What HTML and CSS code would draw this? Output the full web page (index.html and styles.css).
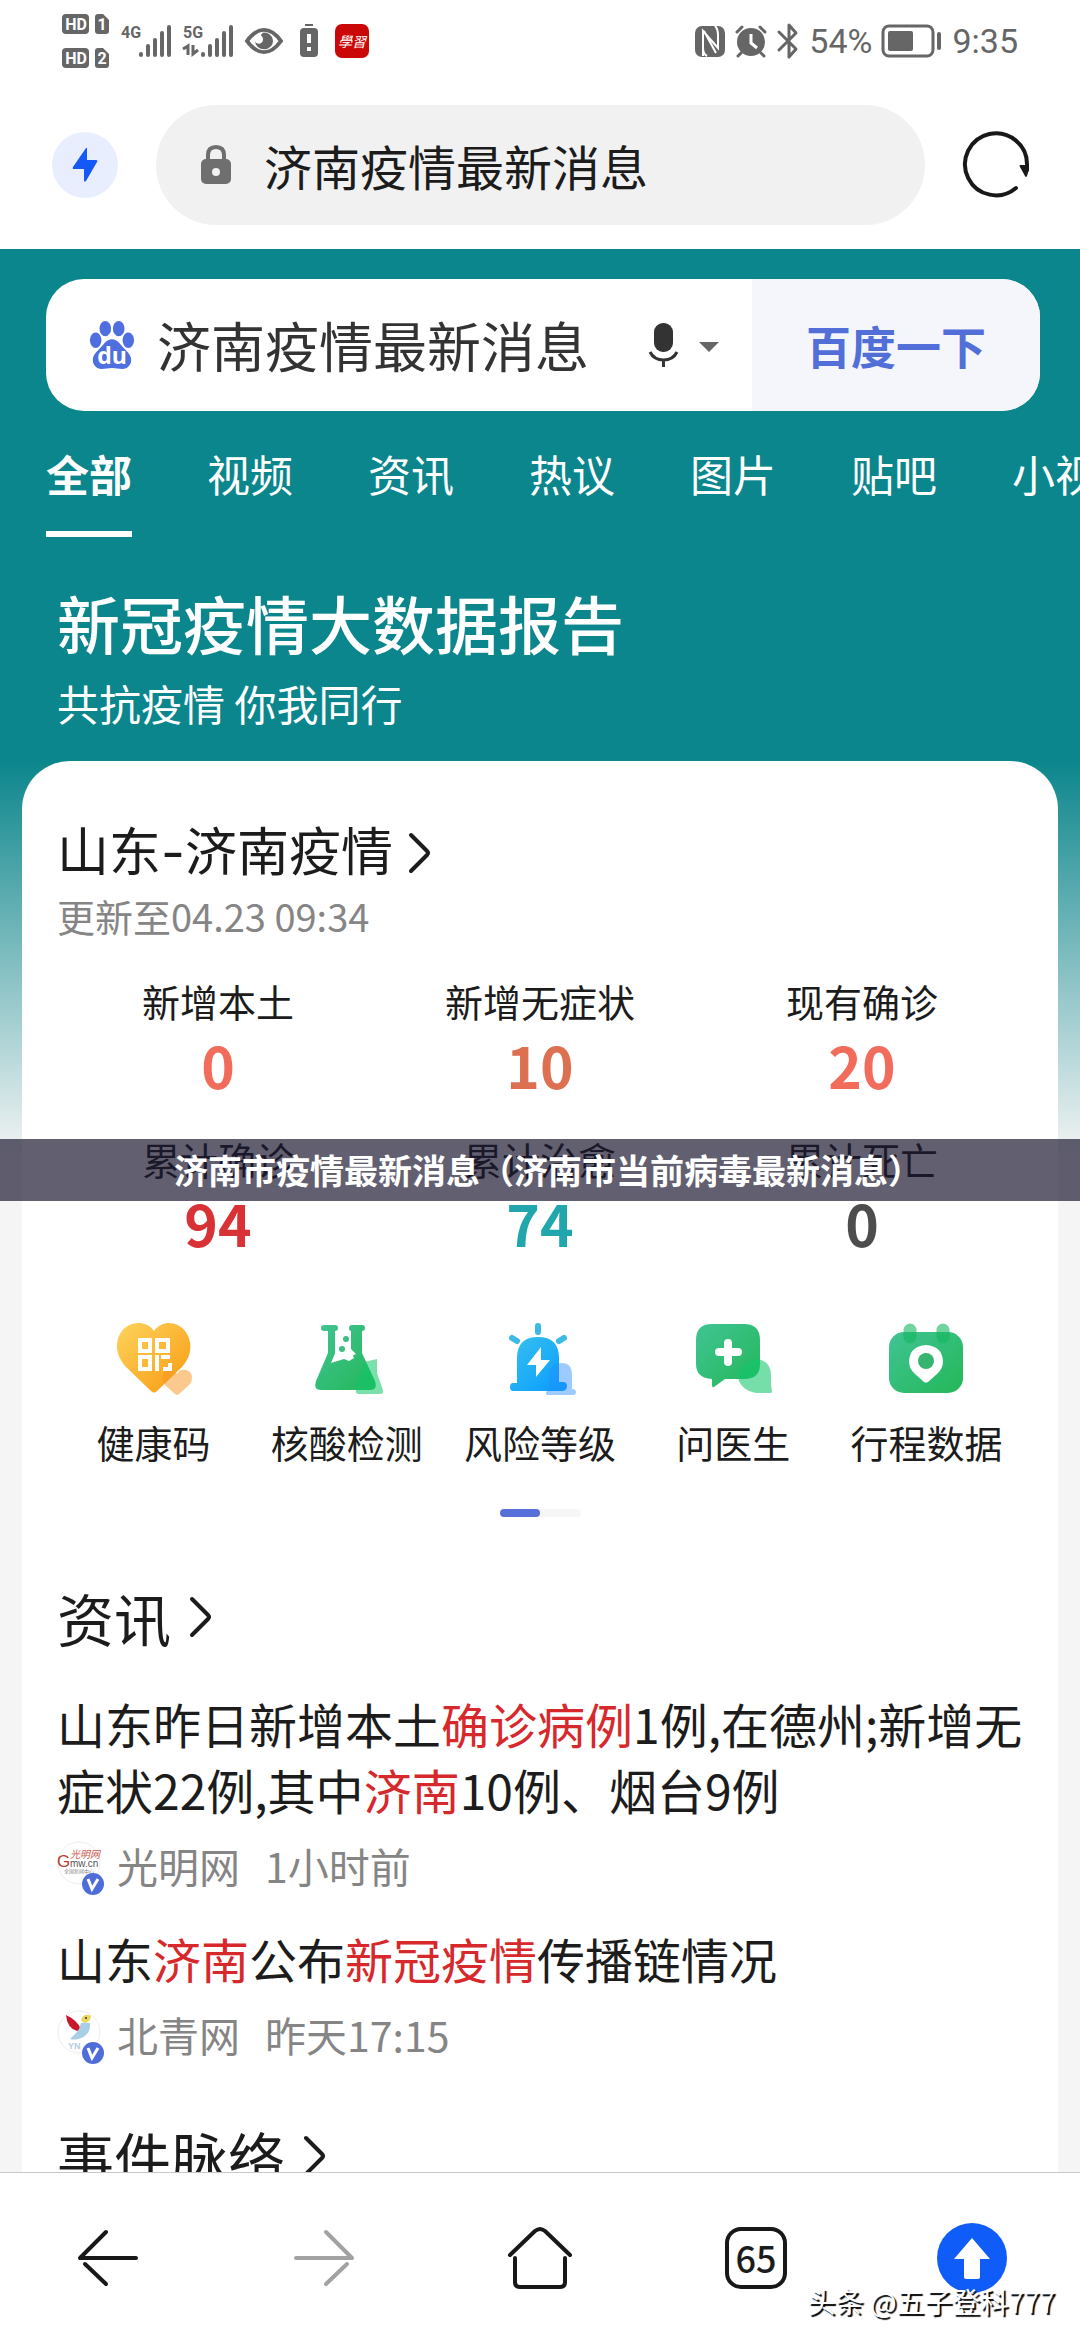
FILE: index.html
```html
<!DOCTYPE html>
<html lang="zh-CN">
<head>
<meta charset="utf-8">
<meta name="viewport" content="width=device-width, initial-scale=1">
<title>济南疫情最新消息</title>
<link rel="stylesheet" href="styles.css">
</head>
<body>
<header class="browser-top">
  <div class="status">
    <div class="status-group">
      <svg width="47" height="54" viewBox="0 0 47 54" class="sim">
        <rect width="27" height="20" rx="4"/><path d="M36 0h5l6 6v11a3 3 0 0 1-3 3h-8a3 3 0 0 1-3-3V3a3 3 0 0 1 3-3z"/>
        <rect y="34" width="27" height="20" rx="4"/><path d="M36 34h5l6 6v11a3 3 0 0 1-3 3h-8a3 3 0 0 1-3-3V37a3 3 0 0 1 3-3z"/>
        <text x="14" y="16">HD</text><text x="40" y="16">1</text>
        <text x="14" y="50">HD</text><text x="40" y="50">2</text>
      </svg>
      <svg width="50" height="32" viewBox="0 0 50 32" class="signal">
        <text x="0" y="13">4G</text>
        <path d="M20 29v1M27 21v9M34 15v15M41 8v22M48 2v28"/>
      </svg>
      <svg width="50" height="32" viewBox="0 0 50 32" class="signal">
        <text x="0" y="13">5G</text>
        <path d="M20 29v1M27 21v9M34 15v15M41 8v22M48 2v28"/>
        <path d="M0 24l5-3v9M10 20v9l5-4" class="thin"/>
      </svg>
      <svg width="38" height="26" viewBox="0 0 38 28" preserveAspectRatio="none">
        <path d="M2 14Q10 2 19 2t17 12Q28 26 19 26T2 14z" fill="none" stroke="#666" stroke-width="4"/>
        <path d="M18 5a9 9 0 1 1-8 9q1 3 4 3a5 5 0 0 0 4-5q0-3-2-4 0-2 2-3z" fill="#666"/>
      </svg>
      <svg width="28" height="34" viewBox="0 0 28 34">
        <path d="M10 1h8" stroke="#666" stroke-width="2"/><rect x="5" y="4" width="18" height="29" rx="4" fill="#666"/>
        <path d="M14 10v9M14 23v4" stroke="#fff" stroke-width="4"/>
      </svg>
      <span class="study">學習</span>
    </div>
    <div class="status-group right">
      <svg width="30" height="31" viewBox="0 0 30 31">
        <rect width="30" height="31" rx="7" fill="#666"/>
        <path d="M8 30V5l15 17V9q0-6-3-9M8 9v13q0 6 4 8M9 5l12 22" fill="none" stroke="#fff" stroke-width="2"/>
      </svg>
      <svg width="32" height="32" viewBox="0 0 32 32">
        <circle cx="16" cy="17" r="14" fill="#666"/>
        <path d="M2 7l5-5M30 7l-5-5M6 28l-3 3M26 28l3 3" stroke="#666" stroke-width="3" stroke-linecap="round"/>
        <path d="M16 9v9l6 5" fill="none" stroke="#fff" stroke-width="3"/>
      </svg>
      <svg width="22" height="36" viewBox="0 0 22 36">
        <path d="M2 9l17 17-7 8V2l7 8L2 27" fill="none" stroke="#666" stroke-width="3" stroke-linejoin="round" stroke-linecap="round"/>
      </svg>
      <span>54%</span>
      <svg width="60" height="34" viewBox="0 0 60 34">
        <rect x="1" y="2" width="50" height="30" rx="6" fill="none" stroke="#666" stroke-width="3"/>
        <rect x="6" y="7" width="25" height="20" rx="2" fill="#666"/>
        <path d="M57 10v14" stroke="#666" stroke-width="4" stroke-linecap="round"/>
      </svg>
      <span>9:35</span>
    </div>
  </div>
  <div class="toolbar">
    <button class="flash" aria-label="极速模式">
      <svg width="26" height="36" viewBox="0 0 26 36"><path d="M14 1q1-1 1 1v11h9q2 0 1 2L14 34q-2 2-2-1V22H2q-2 0-1-2z" fill="#1459f5"/></svg>
    </button>
    <label class="address">
      <svg width="30" height="40" viewBox="0 0 30 40">
        <path d="M7 17V10q0-8 8-8t8 8v7" fill="none" stroke="#6f6f6f" stroke-width="4"/>
        <rect y="14" width="30" height="25" rx="5" fill="#6f6f6f"/><circle cx="15" cy="27" r="4" fill="#f1f1f1"/>
      </svg>
      <input type="text" value="济南疫情最新消息" aria-label="地址栏">
    </label>
    <button class="reload" aria-label="刷新">
      <svg width="66" height="66" viewBox="0 0 66 66">
        <path d="M53 56A31 31 0 1 1 64 33v5" fill="none" stroke="#181818" stroke-width="4" stroke-linecap="round"/>
        <path d="M57 33q-1 0 0 2l5 9q1 2 2 0 2-5 2-11z" fill="#181818"/>
      </svg>
    </button>
  </div>
</header>

<main class="page">
  <section class="hero">
    <form class="search">
      <svg width="46" height="48" viewBox="0 0 46 50" class="paw">
        <ellipse cx="6" cy="20" rx="6" ry="8"/><ellipse cx="16" cy="8" rx="6" ry="8"/><ellipse cx="30" cy="8" rx="6" ry="8"/><ellipse cx="40" cy="20" rx="6" ry="8"/>
        <path d="M23 19c6 0 9 6 13 10s7 7 7 12-4 9-9 9c-4 0-7-1-11-1s-7 1-11 1c-5 0-9-4-9-9s3-8 7-12 7-10 13-10z"/>
        <text x="23" y="45">du</text>
      </svg>
      <input type="search" value="济南疫情最新消息" aria-label="搜索">
      <button type="button" class="voice" aria-label="语音搜索">
        <svg width="72" height="44" viewBox="0 0 72 44">
          <rect x="5" width="19" height="29" rx="9" fill="#333"/>
          <path d="M1 29q4 8 13.500 8T28 29M14.500 37v7" fill="none" stroke="#333" stroke-width="3"/>
          <path d="M50 19h20L60 29z" fill="#666"/>
        </svg>
      </button>
      <button type="submit" class="go">百度一下</button>
    </form>
    <nav class="tabs">
      <a href="#" class="active">全部</a><a href="#">视频</a><a href="#">资讯</a><a href="#">热议</a><a href="#">图片</a><a href="#">贴吧</a><a href="#">小视频</a>
    </nav>
    <div class="banner">
      <h1>新冠疫情大数据报告</h1>
      <p>共抗疫情 你我同行</p>
    </div>
  </section>

  <article class="card">
    <h2 class="city"><a href="#">山东-济南疫情<svg class="chev" viewBox="0 0 22 40"><path d="M2 2l16 16q2 2 0 4L2 38"/></svg></a></h2>
    <p class="updated">更新至04.23 09:34</p>
    <dl class="stats">
      <div><dt>新增本土</dt><dd class="coral">0</dd></div>
      <div><dt>新增无症状</dt><dd class="orange">10</dd></div>
      <div><dt>现有确诊</dt><dd class="coral">20</dd></div>
      <div><dt>累计确诊</dt><dd class="red">94</dd></div>
      <div><dt>累计治愈</dt><dd class="teal">74</dd></div>
      <div><dt>累计死亡</dt><dd class="gray">0</dd></div>
    </dl>
    <nav class="services">
      <a href="#">
        <svg viewBox="0 0 80 80">
          <defs><linearGradient id="gold" x2="1" y2="1"><stop offset="0" stop-color="#fdd35c"/><stop offset="1" stop-color="#f99a10"/></linearGradient></defs>
          <path d="M40 12c8-11 23-10 31 0 9 12 6 26-3 36L43 72q-3 3-6 0L12 48C3 38-1 24 8 12c8-10 24-11 32 0z" fill="url(#gold)"/>
          <path d="M63 55c3-6 14-6 15 3 0 4-1 6-4 9l-9 8q-2 2-4 0l-9-8c-4-4-4-9-2-13 4-5 10-4 13 1z" fill="#f7941d" fill-opacity=".5"/>
          <g fill="none" stroke="#fff" stroke-width="4"><path d="M26 21h10v11H26zM43 21h11v11H43zM26 38h10v12H26z"/><path d="M43 36v16M47 38h9M49 50h7v-6"/></g>
        </svg>健康码</a>
      <a href="#">
        <svg viewBox="0 0 80 80">
          <defs><linearGradient id="green" x2="1" y2="1"><stop offset="0" stop-color="#40c494"/><stop offset="1" stop-color="#24b758"/></linearGradient></defs>
          <path d="M17 6h11q3 0 3 3t-3 3v25l8-2 6 3 7-3-5-5V12q-2 0-2-3t3-3h10q3 0 3 3t-3 3v22l13 28q3 9-5 9H14q-8 0-5-9l12-28V12h-4q-3 0-3-3t3-3z" fill="url(#green)"/>
          <path d="M29 12v20l-5 12 13-4 5 2 5-3-4-9V12z" fill="#fff"/>
          <circle cx="39" cy="20" r="3" fill="#3dbd82"/><circle cx="35" cy="30" r="3" fill="#3dbd82"/>
          <path d="M57 43l13-3v14l6 17q1 4-3 4H52q-4 0-3-4z" fill="#11c76a" fill-opacity=".55"/>
        </svg>核酸检测</a>
      <a href="#">
        <svg viewBox="0 0 80 80">
          <defs><linearGradient id="blue" x2="1" y2="1"><stop offset="0" stop-color="#38c1ee"/><stop offset="1" stop-color="#079bff"/></linearGradient></defs>
          <path d="M17 64V39q0-21 21-21t21 21v24h4q4 0 4 4t-4 5H13q-3 0-3-4t3-4z" fill="url(#blue)"/>
          <path d="M38 7v6M12 19l5 3M64 19l-5 3" stroke="#3db9e5" stroke-width="6" stroke-linecap="round"/>
          <path d="M49 71V57q1-13 13-13 10 0 10 12v14q4 0 4 3t-3 3H47q-3-3 2-5z" fill="#238fff" fill-opacity=".45"/>
          <path d="M41 28v13h9L36 58V46h-9z" fill="#fff"/>
        </svg>风险等级</a>
      <a href="#">
        <svg viewBox="0 0 80 80">
          <path d="M19 5h32q16 0 16 16v24q0 15-16 15H32l-11 8q-2 1-2-2v-6Q3 59 3 45V21Q3 5 19 5z" fill="url(#green)"/>
          <path d="M78 56v9l1 8q0 1-2 1h-7q-18 1-24-12-2-7 1-12 7-10 18-10 13 3 13 16z" fill="#11c76a" fill-opacity=".58"/>
          <path d="M35 24v19M26 33h19" stroke="#fff" stroke-width="8" stroke-linecap="round"/>
        </svg>问医生</a>
      <a href="#">
        <svg viewBox="0 0 80 80">
          <rect x="3" y="13" width="74" height="61" rx="15" fill="url(#green)"/>
          <path d="M24 11v7M57 11v7" stroke="#12b75d" stroke-opacity=".6" stroke-width="13" stroke-linecap="round"/>
          <path d="M40 26q16 1 17 16 0 8-6 13l-9 8q-2 1-4 0l-9-8q-6-5-6-13 1-15 17-16z" fill="#fff"/><circle cx="40" cy="42" r="8" fill="#36b570"/>
        </svg>行程数据</a>
    </nav>
    <div class="pager"><span></span></div>

    <h2 class="section"><a href="#">资讯<svg class="chev" viewBox="0 0 22 40"><path d="M2 2l16 16q2 2 0 4L2 38"/></svg></a></h2>
    <ul class="news">
      <li>
        <a href="#" class="headline">山东昨日新增本土<em>确诊病例</em>1例,在德州;新增无症状22例,其中<em>济南</em>10例、烟台9例</a>
        <p class="source">
          <svg width="48" height="54" viewBox="0 0 48 54" class="avatar">
            <circle cx="22" cy="22" r="21"/>
            <text x="0" y="26" class="gm-g">G</text><text x="13" y="26" class="gm-w">mw.cn</text><text x="13" y="17" class="gm-t">光明网</text><text x="7" y="32" class="gm-s">全国新闻中心</text>
            <circle cx="36" cy="43" r="11" class="vbg"/><path d="M31 38l4 10 6-10" class="v"/>
          </svg>
          <span>光明网</span><time>1小时前</time>
        </p>
      </li>
      <li>
        <a href="#" class="headline">山东<em>济南</em>公布<em>新冠疫情</em>传播链情况</a>
        <p class="source">
          <svg width="48" height="54" viewBox="0 0 48 54" class="avatar">
            <circle cx="22" cy="22" r="21"/>
            <path d="M9 5q11 5 15 14l-4 2Q10 18 9 5z" fill="#c8182b"/>
            <path d="M24 13h9q1 13-12 16-4 1-8 0l6-6 3-4z" fill="#a9cfe6"/>
            <path d="M24 10q2-6 8-5 2 0 2 2-2 6-7 6z" fill="#e9d85c"/><circle cx="29" cy="8" r="1" fill="#333"/>
            <text x="11" y="39" class="yn">YN</text>
            <circle cx="36" cy="43" r="11" class="vbg"/><path d="M31 38l4 10 6-10" class="v"/>
          </svg>
          <span>北青网</span><time>昨天17:15</time>
        </p>
      </li>
    </ul>
    <h2 class="section next"><a href="#">事件脉络<svg class="chev" viewBox="0 0 22 40"><path d="M2 2l16 16q2 2 0 4L2 38"/></svg></a></h2>
  </article>
</main>

<nav class="bottom">
  <button aria-label="后退"><svg width="60" height="56" viewBox="0 0 60 56"><path d="M28 2L2 28h56M7 34l21 20"/></svg></button>
  <button aria-label="前进" disabled><svg width="60" height="56" viewBox="0 0 60 56"><path d="M32 2l26 26H2M53 34L32 54"/></svg></button>
  <button aria-label="主页"><svg width="64" height="62" viewBox="0 0 64 62"><path d="M2 28L27 4q5-4 10 0l25 24M7 31v24q0 5 5 5h40q5 0 5-5V31"/></svg></button>
  <button aria-label="标签页"><span class="count">65</span></button>
  <button aria-label="回到顶部"><svg width="70" height="70" viewBox="0 0 70 70"><circle cx="35" cy="35" r="35" class="up"/><path d="M35 15L53 36H43v18q0 2-2 2H29q-2 0-2-2V36H17z" class="arrow"/></svg></button>
</nav>

<p class="caption">济南市疫情最新消息（济南市当前病毒最新消息）</p>
<p class="watermark">头条 @五子登科777</p>
</body>
</html>
```

FILE: styles.css
```css
* { box-sizing: border-box; margin: 0; padding: 0; }

body {
  position: relative;
  display: flex;
  flex-direction: column;
  height: 100vh;
  overflow: hidden;
  background: #fff;
  color: #1c1c1c;
  font-family: "Noto Sans CJK SC", sans-serif;
}

a { color: inherit; text-decoration: none; }
button, input { border: 0; background: none; font: inherit; color: inherit; outline: 0; }
button { display: flex; align-items: center; justify-content: center; }
h1, h2 { font-weight: 400; }
ul { list-style: none; }
em { font-style: normal; color: #d7282c; }
svg { display: block; flex: none; overflow: visible; }

/* Phone status bar */
.status {
  display: flex;
  justify-content: space-between;
  align-items: center;
  height: 82px;
  padding: 0 62px;
  color: #666;
}
.status-group { display: flex; align-items: center; gap: 12px; }
.status-group.right { gap: 10px; font: 34px/40px Roboto, sans-serif; }
.sim { fill: #666; }
.sim text { fill: #fff; font: 700 16px Roboto, sans-serif; text-anchor: middle; }
.signal text { fill: #666; font: 700 16px Roboto, sans-serif; }
.signal path { fill: none; stroke: #666; stroke-width: 4; stroke-linecap: round; }
.signal .thin { stroke-width: 3; stroke-linecap: butt; }
.study {
  width: 34px;
  height: 34px;
  border-radius: 7px;
  background: #cb0808;
  color: #fff;
  font-size: 14px;
  font-style: italic;
  line-height: 34px;
  text-align: center;
}

/* Browser toolbar */
.toolbar { display: flex; align-items: center; gap: 38px; padding: 23px 51px 24px 52px; }
.flash { width: 66px; height: 66px; border-radius: 50%; background: #e8eefd; }
.address {
  display: flex;
  flex: 1;
  align-items: center;
  gap: 33px;
  min-width: 0;
  height: 120px;
  padding: 0 45px;
  border-radius: 60px;
  background: #f1f1f1;
}
.address input { flex: 1; min-width: 0; font-size: 48px; line-height: 72px; }

/* Result page */
.page {
  flex: 1;
  min-height: 0;
  overflow: hidden;
  background: linear-gradient(#0b868c 512px, #f5f5f5 910px);
}
.hero { padding: 30px 0 30px 46px; color: #fff; }
.search {
  display: flex;
  align-items: center;
  height: 132px;
  margin-right: 40px;
  padding-left: 43px;
  border-radius: 38px;
  background: #fff;
  color: #333;
  overflow: hidden;
}
.paw { fill: #4f6ee0; }
.paw text { fill: #fff; font: 700 24px "Open Sans", sans-serif; text-anchor: middle; }
.search input { flex: 1; min-width: 0; margin-left: 22px; font-size: 54px; line-height: 80px; appearance: none; }
.voice { margin-right: 31px; }
.go { width: 288px; height: 100%; background: #f5f6fb; color: #526fd8; font-size: 45px; font-weight: 700; }

.tabs { display: flex; gap: 75px; padding-top: 32px; overflow: hidden; white-space: nowrap; font-size: 43px; line-height: 60px; }
.tabs a { flex: none; padding-bottom: 28px; border-bottom: 6px solid transparent; }
.tabs .active { border-color: #fff; font-weight: 700; }

.banner { padding: 43px 11px 0; }
.banner h1 { font-size: 63px; font-weight: 500; line-height: 84px; }
.banner p { margin-top: 11px; font-size: 42px; line-height: 56px; }

.card { margin: 0 22px; padding: 59px 35px 0; border-radius: 48px 48px 0 0; background: #fff; }
.card h2 a { display: flex; align-items: center; }
.chev { width: 22px; height: 40px; fill: none; stroke: #1c1c1c; stroke-width: 4; stroke-linecap: round; }
.city { font-family: Inter, "Noto Sans CJK SC", sans-serif; font-size: 52px; line-height: 66px; }
.city .chev { margin-left: 16px; }
.updated { margin-top: 5px; color: #858585; font-size: 38px; line-height: 50px; }

.stats { display: grid; grid-template-columns: repeat(3, 1fr); row-gap: 40px; margin-top: 35px; text-align: center; }
.stats dt { font-size: 38px; line-height: 50px; }
.stats dd { margin-top: 8px; font-size: 57px; font-weight: 700; line-height: 60px; }
.coral { color: #f26c5c; }
.orange { color: #dc7050; }
.red { color: #d93236; }
.teal { color: #20a6ac; }
.gray { color: #4d4d4d; }

.services { display: grid; grid-template-columns: repeat(5, 1fr); margin-top: 67px; font-size: 38px; line-height: 50px; }
.services a { display: flex; flex-direction: column; align-items: center; gap: 18px; white-space: nowrap; }
.services svg { width: 80px; height: 80px; }
.pager { width: 81px; height: 8px; margin: 42px auto 0; border-radius: 4px; background: #f6f6f6; }
.pager span { display: block; width: 40px; height: 8px; border-radius: 4px; background: #566fd9; }

.section { margin-top: 65px; font-size: 57px; line-height: 70px; }
.section .chev { margin-left: 19px; }
.section.next { margin-top: 57px; }

.news { display: grid; gap: 30px; margin-top: 38px; }
.headline { display: block; font-size: 48px; line-height: 66px; }
.source { display: flex; align-items: center; margin-top: 13px; color: #858585; font-size: 41px; line-height: 60px; }
.source span { margin: 0 25px 0 12px; }
.avatar { align-self: flex-end; fill: #fff; stroke: none; }
.avatar > circle:first-child { stroke: #eee; }
.avatar .vbg { fill: #4f6dd9; stroke: none; }
.avatar .v { fill: none; stroke: #fff; stroke-width: 3; }
.gm-g { fill: #c0392b; font: 17px "Liberation Sans", sans-serif; }
.gm-w { fill: #555; font: 10px "Liberation Sans", sans-serif; }
.gm-t { fill: #c75b50; font-size: 10px; font-style: italic; }
.gm-s { fill: #888; font-size: 5px; }
.yn { fill: #b4cbdc; font: 700 9px "Liberation Sans", sans-serif; }

/* Browser navigation */
.bottom {
  display: grid;
  grid-template-columns: repeat(5, 1fr);
  align-items: center;
  height: 168px;
  padding-top: 2px;
  border-top: 1px solid #c8c8c8;
  background: #fff;
}
.bottom path { fill: none; stroke: #181818; stroke-width: 4; stroke-linecap: round; stroke-linejoin: round; }
.bottom button:disabled path { stroke: #a2a2a2; }
.bottom .up { fill: #0f5cf8; }
.bottom .arrow { fill: #fff; stroke: none; }
.count {
  width: 62px;
  height: 62px;
  border: 4px solid #181818;
  border-radius: 16px;
  font: 500 36px/52px "Noto Sans CJK SC", sans-serif;
  text-align: center;
}

/* Overlays */
.caption {
  position: absolute;
  top: 1139px;
  left: 0;
  right: 0;
  padding: 0 0 0 16px;
  background: rgba(28, 25, 48, .69);
  color: #fff;
  font-size: 34px;
  font-weight: 700;
  line-height: 62px;
  text-align: center;
}
.watermark {
  position: absolute;
  right: 25px;
  bottom: 18px;
  color: #fff;
  font-size: 28px;
  line-height: 42px;
  text-shadow: 2px 2px 1px #000;
}
```
